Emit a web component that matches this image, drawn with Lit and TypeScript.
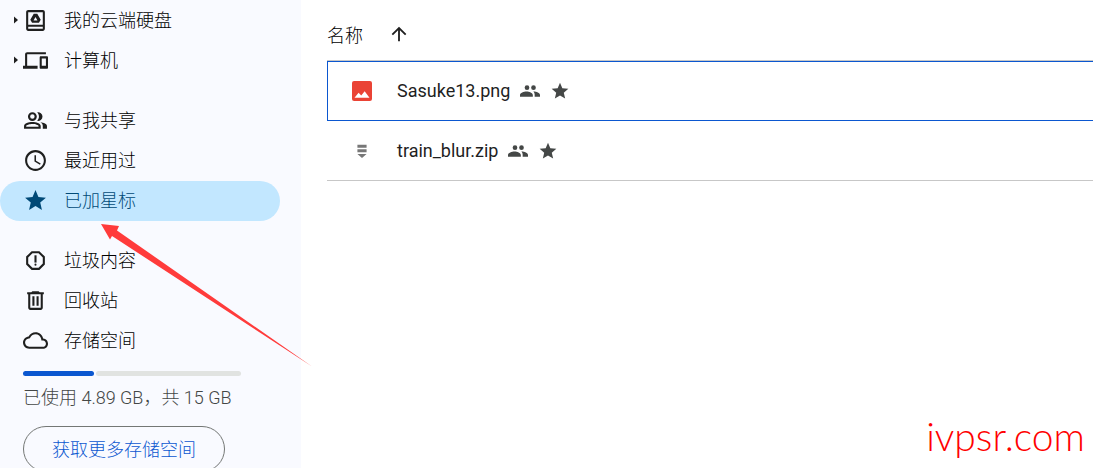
import { LitElement, html, css, svg } from "lit";
import { customElement, property } from "lit/decorators.js";

const icons: Record<string, unknown> = {
  drive: svg`<path fill-rule="evenodd" d="M5 2h14c1.100 0 2 .9 2 2v16c0 1.100-.9 2-2 2H5c-1.100 0-2-.9-2-2V4c0-1.100.9-2 2-2zm0 2v12h14V4zm0 14v2h14v-2z"/><path fill-rule="evenodd" d="M10.300 5.500h3.400L17 11.300l-1.700 2.900H8.700L7 11.300zM12 8.700l-1.900 3.300h3.800z"/>`,
  devices: svg`<path d="M4 6h18V4H4c-1.100 0-2 .9-2 2v11H0v3h14v-3H4V6zm19 2h-6c-.55 0-1 .45-1 1v10c0 .55.45 1 1 1h6c.55 0 1-.45 1-1V9c0-.55-.45-1-1-1zm-1 9h-4v-7h4v7z"/>`,
  shared: svg`<path fill-rule="evenodd" d="M9 12.500a4.250 4.250 0 1 0 0-8.500 4.250 4.250 0 0 0 0 8.500zm0-2.100a2.150 2.150 0 1 1 0-4.300 2.150 2.150 0 0 1 0 4.300zM1 20v-2.800C1 14.500 5.500 13.400 9 13.400s8 1.100 8 3.800V20zm2.100-2h11.800v-.8c0-.8-3-1.800-5.900-1.800s-5.900 1-5.900 1.800z"/><path d="M13.600 12.300c1.100-1.100 1.700-2.500 1.700-4.100s-.6-3-1.700-4.100a4.200 4.200 0 1 1 0 8.200zM16.700 13.700c3.300.4 6.300 1.500 6.300 3.600V20h-4v-2.800c0-1.500-.9-2.700-2.300-3.500z"/>`,
  clock: svg`<path d="M11.990 2C6.470 2 2 6.480 2 12s4.470 10 9.990 10C17.520 22 22 17.520 22 12S17.520 2 11.990 2zM12 20c-4.420 0-8-3.580-8-8s3.580-8 8-8 8 3.580 8 8-3.580 8-8 8zm.5-13H11v6l5.250 3.150.75-1.230-4.500-2.670z"/>`,
  star: svg`<path d="M12 17.270 18.180 21l-1.640-7.030L22 9.240l-7.190-.61L12 2 9.190 8.630 2 9.240l5.460 4.730L5.820 21z"/>`,
  spam: svg`<path d="M15.730 3H8.270L3 8.270v7.460L8.270 21h7.460L21 15.730V8.270L15.730 3zM19 14.900 14.900 19H9.100L5 14.900V9.100L9.100 5h5.800L19 9.100v5.800z"/><circle cx="12" cy="16" r="1"/><path d="M11 7h2v7h-2z"/>`,
  trash: svg`<path fill-rule="evenodd" d="M9 3h6l1 1h4v2h-1v13c0 1.100-.9 2-2 2H7c-1.100 0-2-.9-2-2V6H4V4h4zM7 6v13h10V6zm2 2h2v9H9zm4 0h2v9h-2z"/>`,
  cloud: svg`<path d="M19.350 10.040C18.670 6.590 15.640 4 12 4 9.110 4 6.600 5.640 5.350 8.040 2.340 8.360 0 10.910 0 14c0 3.310 2.690 6 6 6h13c2.760 0 5-2.240 5-5 0-2.640-2.050-4.780-4.650-4.960zM19 18H6c-2.210 0-4-1.790-4-4 0-2.050 1.530-3.760 3.560-3.970l1.070-.11.5-.95C8.080 7.140 9.940 6 12 6c2.620 0 4.880 1.860 5.390 4.430l.3 1.500 1.530.11c1.560.1 2.780 1.410 2.780 2.960 0 1.650-1.350 3-3 3z"/>`,
  up: svg`<path d="m4 12 1.410 1.410L11 7.830V20h2V7.830l5.580 5.590L20 12l-8-8-8 8z"/>`,
  people: svg`<circle cx="8.400" cy="8" r="2.800"/><circle cx="16.200" cy="8" r="2.800"/><path d="M0 19v-2.200c0-2.800 4.600-4.300 7.800-4.300s7.600 1.500 7.600 4.300V19zM16 12.500c3.500-.1 8 1.500 8 4.300V19h-6.400v-2.200c0-1.700-.4-3.200-1.600-4.300z"/>`,
  image: svg`<path fill-rule="evenodd" d="M2.500 0h19A2.500 2.500 0 0 1 24 2.500v19a2.500 2.500 0 0 1-2.500 2.500h-19A2.500 2.500 0 0 1 0 21.500v-19A2.500 2.500 0 0 1 2.500 0zM3 20h18l-5.800-7.800-4.100 5.300-3.200-3.300z"/>`,
  zip: svg`<path d="M6.500 4.500h11V8h-11zM6.500 10h11v3.500h-11zM6.500 15.500h11L12 20.500z"/>`,
};

@customElement("drive-icon")
class DriveIcon extends LitElement {
  @property() name = "";
  static styles = css`
    :host { display: inline-flex; flex: none; width: 25px; height: 25px; }
    svg { width: 100%; height: 100%; fill: currentColor; }
  `;
  render() {
    return html`<svg viewBox="0 0 24 24" aria-hidden="true">${icons[this.name]}</svg>`;
  }
}

interface NavItem { icon: string; label: string; expandable?: boolean; current?: boolean; }

const groups: NavItem[][] = [
  [
    { icon: "drive", label: "我的云端硬盘", expandable: true },
    { icon: "devices", label: "计算机", expandable: true },
  ],
  [
    { icon: "shared", label: "与我共享" },
    { icon: "clock", label: "最近用过" },
    { icon: "star", label: "已加星标", current: true },
  ],
  [
    { icon: "spam", label: "垃圾内容" },
    { icon: "trash", label: "回收站" },
    { icon: "cloud", label: "存储空间" },
  ],
];

const files = [
  { name: "Sasuke13.png", type: "image", selected: true },
  { name: "train_blur.zip", type: "zip", selected: false },
];

const usedGb = 4.89;
const totalGb = 15;

@customElement("app-root")
class AppRoot extends LitElement {
  static styles = css`
    :host {
      display: flex;
      position: relative;
      height: 100vh;
      overflow: hidden;
      background: #fff;
      color: #1f1f1f;
      font: 300 18px/24px "Noto Sans CJK SC", sans-serif;
    }
    aside {
      flex: none;
      box-sizing: border-box;
      width: 301px;
      padding: 1px 21px 0 0;
      background: #f9faff;
    }
    nav { display: flex; flex-direction: column; gap: 20px; color: #000; }
    ul { margin: 0; padding: 0; list-style: none; }
    .item {
      display: flex;
      align-items: center;
      box-sizing: border-box;
      height: 40px;
      padding: 0 0 2px 13px;
      border-radius: 20px;
      color: inherit;
      text-decoration: none;
      white-space: nowrap;
    }
    .item.current { background: #c2e7ff; color: #004a77; }
    .caret { width: 10px; height: 8px; flex: none; }
    .item drive-icon { margin-right: 16px; color: #1f1f1f; }
    .item.current drive-icon { color: inherit; }
    .label { padding-bottom: 2px; }
    .storage { padding: 10px 39px 0 23px; color: #444746; }
    .meter { display: flex; gap: 2px; height: 5px; }
    .used { border-radius: 3px; background: #0b57d0; }
    .free { flex: 1; border-radius: 3px; background: #e1e3e1; }
    .usage { margin: 10px 0 16px; font-family: Roboto, "Noto Sans CJK SC", sans-serif; white-space: nowrap; }
    .more {
      height: 46px;
      padding: 0 28px 2px;
      border: 1px solid #747775;
      border-radius: 23px;
      background: transparent;
      color: #0b57d0;
      font: inherit;
      white-space: nowrap;
    }
    main { flex: 1; min-width: 0; padding-left: 26px; }
    table { width: 100%; border-spacing: 0; }
    th, td { box-sizing: border-box; border-bottom: 1px solid #c7c7c7; }
    th { height: 61px; padding: 8px 0 0; text-align: left; font-weight: inherit; }
    td { height: 60px; padding: 0 0 0 25px; }
    .selected td { padding-left: 24px; border: 1px solid #0b57d0; border-right: 0; }
    .sort {
      display: flex;
      align-items: center;
      gap: 25px;
      padding: 0;
      border: 0;
      background: none;
      color: #000;
      font: inherit;
    }
    .sort drive-icon { width: 22px; height: 22px; color: #1f1f1f; }
    .file { display: flex; align-items: center; gap: 10px; }
    .file drive-icon { width: 20px; height: 20px; color: #444746; }
    .file .image { color: #ea4335; }
    .file .zip { color: #777; }
    .name { margin-left: 15px; font-family: Roboto, "Noto Sans CJK SC", sans-serif; font-weight: 400; }
    .pointer {
      position: absolute;
      left: 101px;
      top: 224px;
      width: 212px;
      height: 144px;
      fill: #ff3b3b;
      pointer-events: none;
    }
    .watermark {
      position: absolute;
      right: 8px;
      bottom: 8px;
      color: #f00;
      font: 300 39px/48px Lato, sans-serif;
    }
  `;

  render() {
    return html`
      <aside>
        <nav>
          ${groups.map((group) => html`<ul>
            ${group.map((item) => html`<li>
              <a class="item ${item.current ? "current" : ""}" href="#" aria-current=${item.current ? "page" : "false"}>
                <svg class="caret" viewBox="0 0 10 8" fill="#1f1f1f" aria-hidden="true">
                  ${item.expandable ? svg`<path d="M1 .5 5 4 1 7.500z"/>` : ""}
                </svg>
                <drive-icon name=${item.icon}></drive-icon>
                <span class="label">${item.label}</span>
              </a>
            </li>`)}
          </ul>`)}
        </nav>
        <section class="storage">
          <div class="meter" role="progressbar" aria-label="存储空间" aria-valuenow=${usedGb} aria-valuemax=${totalGb}>
            <div class="used" style="width:${(usedGb / totalGb) * 100}%"></div>
            <div class="free"></div>
          </div>
          <p class="usage">已使用 ${usedGb} GB，共 ${totalGb} GB</p>
          <button class="more">获取更多存储空间</button>
        </section>
      </aside>
      <main>
        <table>
          <thead>
            <tr><th scope="col"><button class="sort">名称<drive-icon name="up"></drive-icon></button></th></tr>
          </thead>
          <tbody>
            ${files.map((file) => html`<tr class=${file.selected ? "selected" : ""}>
              <td><div class="file">
                <drive-icon class=${file.type} name=${file.type}></drive-icon>
                <span class="name">${file.name}</span>
                <drive-icon name="people"></drive-icon>
                <drive-icon name="star"></drive-icon>
              </div></td>
            </tr>`)}
          </tbody>
        </table>
      </main>
      <svg class="pointer" viewBox="0 0 212 144" aria-hidden="true">
        <path d="M0 0 18 2 16 6.500 211 142.500 11 12 9 15.500z"/>
      </svg>
      <div class="watermark">ivpsr.com</div>
    `;
  }
}
